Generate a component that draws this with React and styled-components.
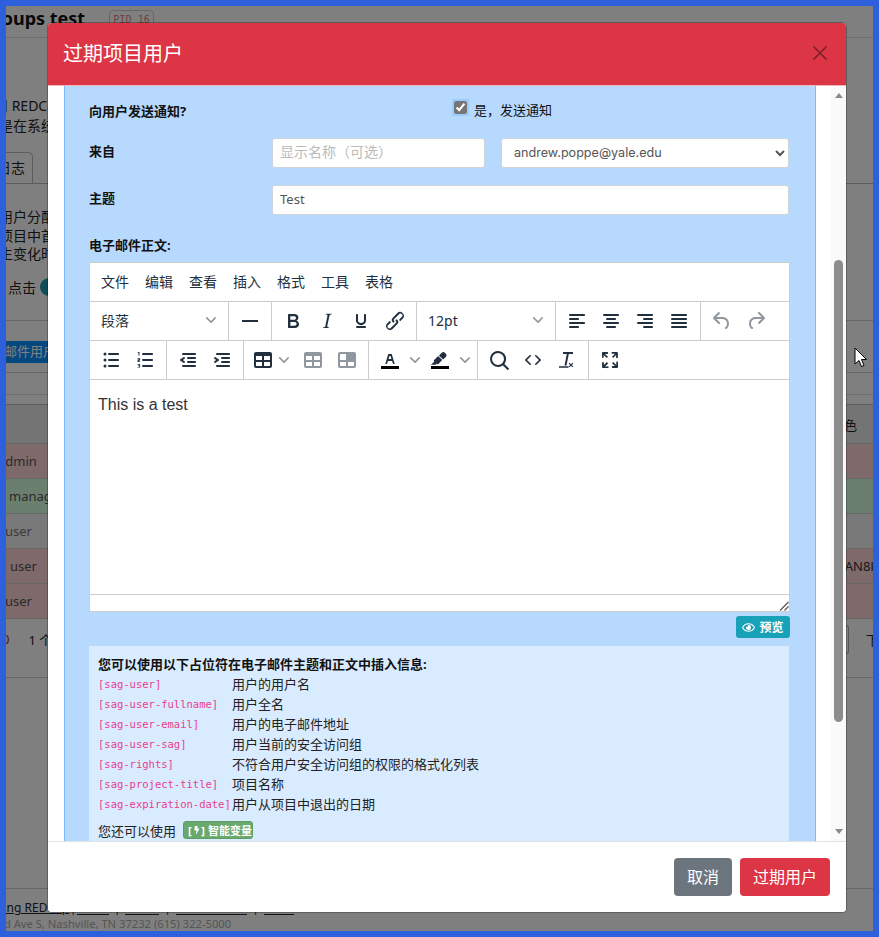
import React from "react";
import styled, { createGlobalStyle } from "styled-components";
import { FaRegEye, FaBolt } from "react-icons/fa";

const sans = `"Noto Sans", "Noto Sans CJK SC", sans-serif`;

const GlobalStyle = createGlobalStyle`
  html, body {
    margin: 0;
    padding: 0;
    background: #2e5fdc;
  }
  * {
    box-sizing: border-box;
  }
`;

const Stage = styled.div`
  position: relative;
  width: 867px;
  height: 925px;
  margin: 6px;
  overflow: hidden;
  background: #fff;
  font-family: ${sans};
  color: #222;
`;

/* page behind the dialog */
const Page = styled.div`
  display: flex;
  flex-direction: column;
  width: 867px;
  font-size: 14px;
  white-space: nowrap;
`;

const TitleBar = styled.div`
  display: flex;
  align-items: flex-start;
  height: 32px;
  border-bottom: 1px solid #ddd;
`;

const PageTitle = styled.h1`
  margin: 0 0 0 -25px;
  font-size: 18px;
  line-height: 24px;
  font-weight: 700;
  color: #111;
`;

const PidBadge = styled.span`
  margin: 4px 0 0 24px;
  padding: 0 3px;
  height: 19px;
  border: 1px solid #ccc;
  border-radius: 4px;
  font: 10.2px/17px "DejaVu Sans Mono", monospace;
  color: #e08484;
`;

const Intro = styled.div`
  margin-top: 58px;
  line-height: 20px;
  font-size: 14px;
`;

const Line = styled.div`
  margin-left: ${(p) => p.$shift || 0}px;
`;

const Clip = styled.span`
  margin-left: ${(p) => p.$shift || 0}px;
`;

const TabStrip = styled.div`
  display: flex;
  height: 39px;
  margin-top: 9px;
  border-bottom: 1px solid #bbb;
  padding-top: 7px;
`;

const Tab = styled.div`
  width: 27px;
  border: 1px solid #bbb;
  border-left: 0;
  border-bottom: 0;
  border-radius: 0 5px 0 0;
  font-size: 14px;
  line-height: 30px;
  text-indent: -9px;
  overflow: hidden;
`;

const Notes = styled.div`
  height: 56px;
  margin-top: 24px;
  line-height: 18.5px;
`;

const HintRow = styled.div`
  display: flex;
  align-items: center;
  gap: 4px;
  height: 20px;
  margin-top: 13px;
  padding-left: 2px;
`;

const InfoDot = styled.span`
  width: 18px;
  height: 18px;
  border-radius: 50%;
  background: #1f9bb0;
  color: #fff;
  font: 700 11px/18px "Liberation Serif", serif;
  text-align: center;
`;

const Rule = styled.div`
  height: 1px;
  margin-top: ${(p) => p.$top}px;
  background: ${(p) => p.$color || "#ccc"};
`;

const BlueButton = styled.div`
  width: 120px;
  height: 22px;
  margin: 20px 0 0 -12px;
  padding-left: 10px;
  border-radius: 3px;
  background: #0a90ff;
  color: #fff;
  font-size: 13px;
  line-height: 21px;
`;

const TableHead = styled.div`
  display: flex;
  justify-content: flex-end;
  height: 40px;
  margin-top: 9px;
  background: #e8e8e8;
  border-top: 1px solid #bbb;
  border-bottom: 1px solid #ccc;
  font-size: 13px;
  line-height: 40px;
  padding-right: 16px;
`;

const rowColors = { red: "#fcd5d5", green: "#d6ffde", plain: "#f2f2f2" };

const TableRow = styled.div`
  display: flex;
  justify-content: space-between;
  height: 35px;
  padding-left: ${(p) => p.$indent || 0}px;
  background: ${(p) => rowColors[p.$tone]};
  border-bottom: 1px solid #ccc;
  font-size: 13px;
  line-height: 34px;
  color: ${(p) => (p.$tone === "plain" ? "#777" : "#555")};
`;

const RowCode = styled.span`
  margin-right: -7px;
  color: #333;
`;

const Pager = styled.div`
  display: flex;
  align-items: center;
  justify-content: space-between;
  height: 59px;
  padding-bottom: 17px;
  border-bottom: 1px solid #ccc;
  font-size: 13px;
`;

const PagerCount = styled.span`
  display: flex;
  gap: 19px;
  margin-left: -4px;
`;

const PagerZero = styled.span`
  color: #a02060;
`;

const PagerBox = styled.span`
  display: flex;
  align-items: center;
  gap: 17px;
  margin-right: -6px;
`;

const PagerInput = styled.span`
  width: 26px;
  height: 29px;
  border: 1px solid #aaa;
  border-left: 0;
  border-radius: 0 3px 3px 0;
`;

const PageFooter = styled.footer`
  margin-top: 210px;
  border-top: 1px solid #ccc;
  padding-top: 10px;
  line-height: 17px;
  color: #aaa;
`;

const FootLinks = styled.div`
  display: flex;
  margin-left: -17px;
  font-size: 12px;
  color: #223;
`;

const FootLink = styled.span`
  display: inline-block;
  min-width: ${(p) => p.$width || 0}px;
  text-decoration: underline;
  border-bottom: ${(p) => (p.$width ? "1px solid #223" : "0")};
  height: 16px;
`;

const FootSep = styled.span`
  width: ${(p) => p.$width}px;
  text-align: center;
`;

const Address = styled.div`
  margin: -1px 0 0 -5px;
  font-size: 11.2px;
`;

const Backdrop = styled.div`
  position: absolute;
  inset: 0;
  background: rgba(0, 0, 0, 0.5);
`;

const Cursor = styled.svg`
  position: absolute;
  left: 848px;
  top: 341px;
`;

/* dialog */
const Modal = styled.div`
  position: absolute;
  left: 42px;
  top: 17px;
  display: flex;
  flex-direction: column;
  width: 798px;
  height: 889px;
  background: #fff;
  border-radius: 4px;
  box-shadow: 0 0 0 1px rgba(0, 0, 0, 0.25);
  overflow: hidden;
`;

const ModalHeader = styled.header`
  display: flex;
  align-items: center;
  justify-content: space-between;
  flex: none;
  height: 63px;
  padding: 0 18px 0 15px;
  background: #dc3545;
  border-bottom: 1px solid #f0b9bf;
`;

const ModalTitle = styled.h2`
  margin: 0 0 4px;
  color: #fff;
  font-size: 20px;
  font-weight: 400;
`;

const CloseIcon = styled.svg`
  margin-bottom: 2px;
`;

const ModalBody = styled.div`
  display: flex;
  flex: 1;
  min-height: 0;
`;

const PanelWrap = styled.div`
  flex: 1;
  min-width: 0;
  padding: 0 15px 0 16px;
  overflow: hidden;
`;

const Panel = styled.div`
  min-height: 100%;
  padding: 14px 25px 0 24px;
  background: #b7d9fe;
  border-left: 1px solid #7ab8ff;
  border-right: 1px solid #7ab8ff;
  color: #111;
`;

const ScrollTrack = styled.div`
  position: relative;
  display: flex;
  flex: none;
  flex-direction: column;
  align-items: center;
  justify-content: space-between;
  width: 15px;
  padding: 7px 0 7px;
  background: #fafafa;
`;

const Arrow = styled.span`
  width: 0;
  height: 0;
  border-left: 4.5px solid transparent;
  border-right: 4.5px solid transparent;
  ${(p) => (p.$down ? "border-top" : "border-bottom")}: 5px solid #8a8a8a;
`;

const Thumb = styled.span`
  position: absolute;
  left: 3px;
  top: 174px;
  width: 9px;
  height: 462px;
  border-radius: 5px;
  background: #8c8c8c;
`;

const NotifyRow = styled.div`
  display: grid;
  grid-template-columns: 364px 1fr;
  align-items: center;
  height: 22px;
`;

const FieldLabel = styled.label`
  font-size: 13px;
  font-weight: 700;
  line-height: 18px;
  margin-top: ${(p) => p.$lift || 0}px;
`;

const CheckLabel = styled.label`
  display: flex;
  align-items: center;
  gap: 7px;
  margin-top: -4px;
  font-size: 13px;
`;

const Check = styled.input`
  width: 13px;
  height: 13px;
  margin: -3px 0 0 1px;
  accent-color: #757575;
  outline: 2px solid #9ccbff;
  outline-offset: 0;
`;

const FormRow = styled.div`
  display: grid;
  grid-template-columns: ${(p) => (p.$split ? "183px 213px 304px" : "183px 517px")};
  align-items: center;
  height: 30px;
  margin-top: ${(p) => p.$top}px;
`;

const TextInput = styled.input`
  width: 100%;
  height: 30px;
  padding: 0 7px 3px;
  border: 1px solid #ced4da;
  border-radius: 3px;
  background: #fff;
  color: #555;
  font: 13px "Noto Sans", "Noto Sans CJK SC", sans-serif;
  &::placeholder {
    color: #bbb;
    font-size: 14px;
  }
`;

const FromSelect = styled.select`
  width: 288px;
  margin-left: 16px;
  height: 30px;
  padding: 0 0 2px 8px;
  border: 1px solid #ced4da;
  border-radius: 3px;
  background: #fff;
  color: #555;
  font: 12.6px Inter, sans-serif;
`;

const BodyLabel = styled.div`
  margin: 21px 0 8px;
  font-size: 13px;
  font-weight: 700;
  line-height: 18px;
`;

const Editor = styled.div`
  display: flex;
  flex-direction: column;
  height: 350px;
  background: #fff;
  border: 1px solid #ccc;
`;

const MenuBar = styled.div`
  display: flex;
  flex: none;
  align-items: center;
  gap: 16px;
  height: 39px;
  padding: 0 0 2px 11px;
  border-bottom: 1px solid #ccc;
  font-size: 14px;
  color: #222f3e;
`;

const ToolRow = styled.div`
  display: flex;
  flex: none;
  height: 39px;
  border-bottom: 1px solid #ccc;
`;

const ToolGroup = styled.div`
  display: flex;
  align-items: center;
  padding: 0 4px;
  border-right: ${(p) => (p.$last ? "0" : "1px solid #ccc")};
`;

const SelectGroup = styled.div`
  display: flex;
  align-items: center;
  justify-content: space-between;
  width: ${(p) => p.$width}px;
  padding: 0 12px 2px 11px;
  border-right: 1px solid #ccc;
  font-size: 14px;
  color: #222f3e;
`;

const ToolButton = styled.span`
  display: flex;
  flex: none;
  align-items: center;
  justify-content: center;
  width: ${(p) => p.$width || 34}px;
  height: 34px;
`;

const ToolIcon = styled.svg`
  width: 24px;
  height: 24px;
  fill: ${(p) => (p.$muted ? "rgba(34, 47, 62, 0.5)" : "#222f3e")};
`;

const Chevron = styled.svg`
  flex: none;
  width: 10px;
  height: 10px;
  margin: ${(p) => p.$margin || "0 3px"};
  fill: rgba(34, 47, 62, 0.5);
`;

const EditArea = styled.div`
  flex: 1;
  padding: 14px 8px 0;
  font: 16px/22px "Liberation Sans", Arial, sans-serif;
  color: #333;
`;

const StatusBar = styled.div`
  display: flex;
  flex: none;
  align-items: flex-end;
  justify-content: flex-end;
  height: 17px;
  border-top: 1px solid #ccc;
`;

const PreviewWrap = styled.div`
  display: flex;
  justify-content: flex-end;
  margin-top: 4px;
`;

const PreviewButton = styled.span`
  display: flex;
  align-items: center;
  justify-content: center;
  gap: 4px;
  width: 54px;
  height: 22px;
  border-radius: 3px;
  background: #17a2b8;
  color: #fff;
  font-size: 12px;
  font-weight: 700;
`;

const InfoBox = styled.div`
  width: 700px;
  height: 260px;
  margin-top: 8px;
  padding: 9px 9px;
  background: #d9ebff;
  font-size: 13px;
  color: #222;
`;

const InfoTitle = styled.div`
  font-weight: 700;
  line-height: 18px;
  color: #111;
`;

const TokenGrid = styled.div`
  display: grid;
  grid-template-columns: 134px 1fr;
  grid-auto-rows: 20px;
  align-items: center;
`;

const Token = styled.code`
  padding-top: 2px;
  font: 10.5px "DejaVu Sans Mono", monospace;
  color: #e83e8c;
`;

const SmartRow = styled.div`
  display: flex;
  align-items: center;
  gap: 7px;
  height: 18px;
  margin-top: 8px;
`;

const SmartBadge = styled.span`
  display: flex;
  align-items: center;
  gap: 1px;
  width: 70px;
  height: 18px;
  padding-left: 4px;
  border: 1px solid #5d9e62;
  border-radius: 3px;
  background: #6aa96d;
  color: #fff;
  font-size: 11px;
  font-weight: 700;
  white-space: nowrap;
`;

const BadgeLabel = styled.span`
  margin-left: 2px;
`;

const ModalFooter = styled.footer`
  display: flex;
  flex: none;
  align-items: center;
  justify-content: flex-end;
  gap: 8px;
  height: 71px;
  padding: 0 16px 0 0;
  border-top: 1px solid #dee2e6;
  background: #fff;
`;

const ActionButton = styled.button`
  height: 38px;
  width: ${(p) => p.$width}px;
  padding: 0 0 3px;
  border: 0;
  border-radius: 4px;
  background: ${(p) => p.$bg};
  color: #fff;
  font: 400 16px "Noto Sans", "Noto Sans CJK SC", sans-serif;
`;

const icons = {
  hr: "M4 11h16v2H4z",
  bold: "M7.8 19c-.3 0-.5 0-.6-.2l-.2-.5V5.7c0-.2 0-.4.2-.5l.6-.2h5c1.5 0 2.7.3 3.5 1 .7.6 1.1 1.4 1.1 2.5a3 3 0 0 1-.6 1.9c-.4.6-1 1-1.6 1.2.4.1.9.3 1.3.6s.8.7 1 1.2c.4.4.5 1 .5 1.6 0 1.3-.4 2.3-1.3 3-.8.7-2.1 1-3.8 1H7.8zm5-8.3c.6 0 1.2-.1 1.6-.5.4-.3.6-.7.6-1.3 0-1.1-.8-1.7-2.3-1.7H9.3v3.5h3.4zm.5 6c.7 0 1.3-.1 1.7-.4.4-.4.6-.9.6-1.5s-.2-1-.7-1.4c-.4-.3-1-.4-2-.4H9.4v3.8h4z",
  italic: "M16.7 4.7l-.1.9h-.3c-.6 0-1 0-1.4.3-.3.3-.4.6-.5 1.1l-2.1 9.8v.6c0 .5.4.8 1.4.8h.2l-.2.8H8l.2-.8h.2c1.1 0 1.8-.5 2-1.5l2-9.8.1-.5c0-.6-.4-.8-1.4-.8h-.3l.2-.9h5.8z",
  underline: "M16 5c.6 0 1 .4 1 1v5.5a4 4 0 0 1-.4 1.8l-1 1.4a5.3 5.3 0 0 1-5.5 1 5 5 0 0 1-1.6-1c-.5-.4-.8-.9-1.1-1.4a4 4 0 0 1-.4-1.8V6c0-.6.4-1 1-1s1 .4 1 1v5.5c0 .3 0 .6.2 1l.6.7a3.3 3.3 0 0 0 2.2.8 3.4 3.4 0 0 0 2.2-.8c.3-.2.4-.5.6-.8l.2-.9V6c0-.6.4-1 1-1zM8 17h8c.6 0 1 .4 1 1s-.4 1-1 1H8a1 1 0 0 1 0-2z",
  link: "M6.2 12.3a1 1 0 0 1 1.4 1.4l-2 2a2 2 0 1 0 2.6 2.8l4.8-4.8a1 1 0 0 0 0-1.4 1 1 0 1 1 1.4-1.3 2.9 2.9 0 0 1 0 4L9.6 20a3.9 3.9 0 0 1-5.5-5.5l2-2zm11.6-.6a1 1 0 0 1-1.4-1.4l2-2a2 2 0 1 0-2.6-2.8L11 10.3a1 1 0 0 0 0 1.4A1 1 0 1 1 9.6 13a2.9 2.9 0 0 1 0-4L14.4 4a3.9 3.9 0 0 1 5.5 5.5l-2 2z",
  alignLeft: "M5 5h14c.6 0 1 .4 1 1s-.4 1-1 1H5a1 1 0 1 1 0-2zm0 4h8c.6 0 1 .4 1 1s-.4 1-1 1H5a1 1 0 1 1 0-2zm0 8h8c.6 0 1 .4 1 1s-.4 1-1 1H5a1 1 0 0 1 0-2zm0-4h14c.6 0 1 .4 1 1s-.4 1-1 1H5a1 1 0 0 1 0-2z",
  alignCenter: "M5 5h14c.6 0 1 .4 1 1s-.4 1-1 1H5a1 1 0 1 1 0-2zm3 4h8c.6 0 1 .4 1 1s-.4 1-1 1H8a1 1 0 1 1 0-2zm0 8h8c.6 0 1 .4 1 1s-.4 1-1 1H8a1 1 0 0 1 0-2zm-3-4h14c.6 0 1 .4 1 1s-.4 1-1 1H5a1 1 0 0 1 0-2z",
  alignRight: "M5 5h14c.6 0 1 .4 1 1s-.4 1-1 1H5a1 1 0 1 1 0-2zm6 4h8c.6 0 1 .4 1 1s-.4 1-1 1h-8a1 1 0 0 1 0-2zm0 8h8c.6 0 1 .4 1 1s-.4 1-1 1h-8a1 1 0 0 1 0-2zm-6-4h14c.6 0 1 .4 1 1s-.4 1-1 1H5a1 1 0 0 1 0-2z",
  alignJustify: "M5 5h14c.6 0 1 .4 1 1s-.4 1-1 1H5a1 1 0 1 1 0-2zm0 4h14c.6 0 1 .4 1 1s-.4 1-1 1H5a1 1 0 1 1 0-2zm0 4h14c.6 0 1 .4 1 1s-.4 1-1 1H5a1 1 0 0 1 0-2zm0 4h14c.6 0 1 .4 1 1s-.4 1-1 1H5a1 1 0 0 1 0-2z",
  undo: "M6.4 8H12c3.7 0 6.2 2 6.8 5.1.6 2.7-.4 5.6-2.3 6.8a1 1 0 0 1-1-1.8c1.1-.6 1.8-2.7 1.4-4.6-.5-2.1-2.1-3.5-4.9-3.5H6.4l3.3 3.3a1 1 0 1 1-1.4 1.4l-5-5a1 1 0 0 1 0-1.4l5-5a1 1 0 0 1 1.4 1.4L6.4 8z",
  redo: "M17.6 10H12c-2.8 0-4.4 1.4-4.9 3.5-.4 2 .3 4 1.4 4.6a1 1 0 1 1-1 1.8c-2-1.2-2.9-4.1-2.3-6.8.6-3 3-5.1 6.8-5.1h5.6l-3.3-3.3a1 1 0 1 1 1.4-1.4l5 5a1 1 0 0 1 0 1.4l-5 5a1 1 0 0 1-1.4-1.4l3.3-3.3z",
  bullets: "M10 5h9c.6 0 1 .4 1 1s-.4 1-1 1h-9a1 1 0 1 1 0-2zm0 6h9c.6 0 1 .4 1 1s-.4 1-1 1h-9a1 1 0 0 1 0-2zm0 6h9c.6 0 1 .4 1 1s-.4 1-1 1h-9a1 1 0 0 1 0-2zM6 4.5a1.5 1.5 0 1 1 0 3 1.5 1.5 0 0 1 0-3zm0 6a1.5 1.5 0 1 1 0 3 1.5 1.5 0 0 1 0-3zm0 6a1.5 1.5 0 1 1 0 3 1.5 1.5 0 0 1 0-3z",
  numbers: "M10 5h9c.6 0 1 .4 1 1s-.4 1-1 1h-9a1 1 0 1 1 0-2zm0 6h9c.6 0 1 .4 1 1s-.4 1-1 1h-9a1 1 0 0 1 0-2zm0 6h9c.6 0 1 .4 1 1s-.4 1-1 1h-9a1 1 0 0 1 0-2zM5.5 4h1v3.5h-1V5h-.8v-.6zM4.5 10.3h2.6v2l-1.6 1h1.6v.7H4.5v-1.6l1.6-1h-1.6zM4.5 16h2.6v3.6H4.5v-.7h1.7v-.7H5v-.6h1.2v-.9H4.500z",
  outdent: "M7 5h12c.6 0 1 .4 1 1s-.4 1-1 1H7a1 1 0 1 1 0-2zm5 4h7c.6 0 1 .4 1 1s-.4 1-1 1h-7a1 1 0 0 1 0-2zm0 4h7c.6 0 1 .4 1 1s-.4 1-1 1h-7a1 1 0 0 1 0-2zm-5 4h12a1 1 0 0 1 0 2H7a1 1 0 0 1 0-2zm1.600-3.800L6.800 12l1.800-1.200a1 1 0 0 0-1.200-1.600l-3 2a1 1 0 0 0 0 1.600l3 2a1 1 0 1 0 1.200-1.600z",
  indent: "M7 5h12c.6 0 1 .4 1 1s-.4 1-1 1H7a1 1 0 1 1 0-2zm5 4h7c.6 0 1 .4 1 1s-.4 1-1 1h-7a1 1 0 0 1 0-2zm0 4h7c.6 0 1 .4 1 1s-.4 1-1 1h-7a1 1 0 0 1 0-2zm-5 4h12a1 1 0 0 1 0 2H7a1 1 0 0 1 0-2zm-2.600-3.800L6.200 12l-1.800-1.200a1 1 0 0 1 1.200-1.600l3 2a1 1 0 0 1 0 1.600l-3 2a1 1 0 1 1-1.200-1.600z",
  table: "M19 4a2 2 0 0 1 2 2v12a2 2 0 0 1-2 2H5a2 2 0 0 1-2-2V6c0-1.100.9-2 2-2h14zM5 14v4h6v-4H5zm14 0h-6v4h6v-4zm0-6h-6v4h6V8zM5 12h6V8H5v4z",
  tableMerged: "M19 4a2 2 0 0 1 2 2v12a2 2 0 0 1-2 2H5a2 2 0 0 1-2-2V6c0-1.100.9-2 2-2h14zM5 14v4h6v-4H5zm14 0h-6v4h6v-4zM5 12h6V6H5v6z",
  search: "M16 17.300a8 8 0 1 1 1.400-1.400l4.300 4.400a1 1 0 0 1-1.400 1.400l-4.400-4.300zm-5-.300a6 6 0 1 0 0-12 6 6 0 0 0 0 12z",
  code: "M9.800 15.700c.3.300.3.800 0 1-.3.400-.9.400-1.200 0l-4.400-4.100a.8.800 0 0 1 0-1.200l4.400-4.200c.3-.3.9-.3 1.200 0 .3.300.3.800 0 1.100L6 12l3.800 3.700zM14.200 15.700c-.3.300-.3.800 0 1 .4.400.9.400 1.200 0l4.400-4.100c.3-.3.3-.9 0-1.200l-4.400-4.200a.8.800 0 0 0-1.200 0c-.3.300-.3.800 0 1.100L18 12l-3.800 3.700z",
  clearFormat: "M8 4h10v2h-4.200l-2.300 11.500h-2L11.800 6H8zM4 18.300h9.500v1.500H4zM14.500 14.700l1.500 1.500 1.500-1.500.8.800-1.500 1.500 1.500 1.500-.8.800-1.500-1.500-1.500 1.500-.8-.8 1.500-1.500-1.500-1.500z",
  fullscreen: "M15.300 10l-1.200-1.300 2.900-3h-2.300a.9.900 0 1 1 0-1.700H19c.5 0 .9.400.9.900v4.400a.9.900 0 1 1-1.800 0V7l-2.900 3zm0 4l3 3v-2.300a.9.900 0 1 1 1.700 0V19c0 .5-.4.900-.9.900h-4.400a.9.900 0 1 1 0-1.800H17l-3-2.900 1.300-1.200zM10 15.400l-2.900 3h2.300a.9.900 0 1 1 0 1.700H5a.9.900 0 0 1-.9-.9v-4.400a.9.900 0 1 1 1.800 0V17l2.900-3 1.200 1.300zM8.700 10L5.700 7v2.300a.9.900 0 0 1-1.700 0V5c0-.5.400-.9.900-.9h4.400a.9.900 0 0 1 0 1.800H7l3 2.900-1.300 1.200z",
  textColor: "M8.700 16h-.8a.5.5 0 0 1-.5-.6l2.700-9c.1-.3.3-.4.500-.4h2.800c.2 0 .4.100.5.400l2.700 9a.5.500 0 0 1-.5.600h-.8a.5.500 0 0 1-.4-.4l-.7-2.200c0-.3-.3-.4-.5-.4h-3.400c-.2 0-.4.100-.5.400l-.7 2.200c0 .3-.2.400-.4.400zm2.600-7.600l-.6 2a.5.500 0 0 0 .5.600h1.600a.5.500 0 0 0 .5-.6l-.6-2c0-.3-.3-.4-.5-.4h-.4c-.2 0-.4.100-.5.400z",
  highlight: "M7.700 16.700H3l3.300-3.300-.7-.8L10.200 8l4 4.100-4 4.200c-.2.200-.6.200-.8 0l-.6-.7-1.100 1.100zm5-7.500L11 7.400l3-2.900a2 2 0 0 1 2.600 0L18 6c.7.700.7 2 0 2.700l-2.900 2.900-1.800-1.800-.5-.6",
};

function Glyph({ name, muted, bar }) {
  return (
    <ToolIcon viewBox="0 0 24 24" $muted={muted}>
      <path fillRule="evenodd" d={icons[name]} />
      {bar && <rect x="3" y="18" width="18" height="3" fill="#000" />}
    </ToolIcon>
  );
}

function Tool({ name, muted, bar, width }) {
  return (
    <ToolButton $width={width}>
      <Glyph name={name} muted={muted} bar={bar} />
    </ToolButton>
  );
}

function ChevronDown({ margin }) {
  return (
    <Chevron viewBox="0 0 10 10" $margin={margin}>
      <path d="M8.700 2.200c.3-.3.8-.3 1 0 .4.400.4.900 0 1.200L5.700 7.800c-.3.300-.9.300-1.200 0L.2 3.400a.8.800 0 0 1 0-1.200c.3-.3.8-.3 1.100 0L5 6l3.700-3.800z" />
    </Chevron>
  );
}

const tokens = [
  ["[sag-user]", "用户的用户名"],
  ["[sag-user-fullname]", "用户全名"],
  ["[sag-user-email]", "用户的电子邮件地址"],
  ["[sag-user-sag]", "用户当前的安全访问组"],
  ["[sag-rights]", "不符合用户安全访问组的权限的格式化列表"],
  ["[sag-project-title]", "项目名称"],
  ["[sag-expiration-date]", "用户从项目中退出的日期"],
];

const menus = ["文件", "编辑", "查看", "插入", "格式", "工具", "表格"];

export default function App() {
  return (
    <>
      <GlobalStyle />
      <Stage>
        <Page>
          <TitleBar>
            <PageTitle>Groups test</PageTitle>
            <PidBadge>PID 16</PidBadge>
          </TitleBar>
          <Intro>
            <Line $shift={-12}>用 REDCap 用户</Line>
            <Line $shift={-7}>是在系统中的</Line>
          </Intro>
          <TabStrip>
            <Tab>日志</Tab>
          </TabStrip>
          <Notes>
            <Line $shift={-7}>用户分配到</Line>
            <Line $shift={-7}>项目中首次</Line>
            <Line $shift={-7}>生变化时</Line>
          </Notes>
          <HintRow>
            点击
            <InfoDot>i</InfoDot>
          </HintRow>
          <Rule $top={23} />
          <BlueButton>邮件用户</BlueButton>
          <Rule $top={9} />
          <Rule $top={21} $color="#ddd" />
          <TableHead>角色</TableHead>
          <TableRow $tone="red">
            <Clip $shift={-8}>admin</Clip>
          </TableRow>
          <TableRow $tone="green" $indent={3}>
            <span>manager</span>
          </TableRow>
          <TableRow $tone="plain">
            <Clip $shift={-1}>user</Clip>
          </TableRow>
          <TableRow $tone="red" $indent={4}>
            <span>user</span>
            <RowCode>AN8H</RowCode>
          </TableRow>
          <TableRow $tone="red">
            <Clip $shift={-1}>user</Clip>
          </TableRow>
          <Pager>
            <PagerCount>
              <PagerZero>0</PagerZero>
              <span>1 个</span>
            </PagerCount>
            <PagerBox>
              <PagerInput />
              <span>下</span>
            </PagerBox>
          </Pager>
          <PageFooter>
            <FootLinks>
              <FootLink>Using REDCap</FootLink>
              <FootSep $width={8}>|</FootSep>
              <FootLink $width={32} />
              <FootSep $width={16}>|</FootSep>
              <FootLink $width={34} />
              <FootSep $width={17}>|</FootSep>
              <FootLink $width={71} />
              <FootSep $width={17}>|</FootSep>
              <FootLink $width={30} />
            </FootLinks>
            <Address>ld Ave S, Nashville, TN 37232 (615) 322-5000</Address>
          </PageFooter>
        </Page>
        <Backdrop />
        <Cursor width="13" height="21" viewBox="0 0 13 21">
          <path d="M1 1v16l4-3.500 2.500 6 2.500-1-2.500-6H12.500z" fill="#fff" stroke="#000" strokeWidth="1" />
        </Cursor>
        <Modal>
          <ModalHeader>
            <ModalTitle>过期项目用户</ModalTitle>
            <CloseIcon width="16" height="16" viewBox="0 0 16 16">
              <path d="M1.500 1.500l13 13M14.500 1.500l-13 13" stroke="#7c1f2b" strokeWidth="1.600" fill="none" />
            </CloseIcon>
          </ModalHeader>
          <ModalBody>
            <PanelWrap>
              <Panel>
                <NotifyRow>
                  <FieldLabel>向用户发送通知?</FieldLabel>
                  <CheckLabel>
                    <Check type="checkbox" defaultChecked />
                    是，发送通知
                  </CheckLabel>
                </NotifyRow>
                <FormRow $split $top={16}>
                  <FieldLabel $lift={-4}>来自</FieldLabel>
                  <TextInput placeholder="显示名称（可选）" />
                  <FromSelect defaultValue="andrew.poppe@yale.edu">
                    <option>andrew.poppe@yale.edu</option>
                  </FromSelect>
                </FormRow>
                <FormRow $top={17}>
                  <FieldLabel $lift={-4}>主题</FieldLabel>
                  <TextInput defaultValue="Test" />
                </FormRow>
                <BodyLabel>电子邮件正文:</BodyLabel>
                <Editor>
                  <MenuBar>
                    {menus.map((m) => (
                      <span key={m}>{m}</span>
                    ))}
                  </MenuBar>
                  <ToolRow>
                    <SelectGroup $width={139}>
                      段落
                      <ChevronDown margin="0" />
                    </SelectGroup>
                    <ToolGroup>
                      <Tool name="hr" />
                    </ToolGroup>
                    <ToolGroup>
                      <Tool name="bold" />
                      <Tool name="italic" />
                      <Tool name="underline" />
                      <Tool name="link" />
                    </ToolGroup>
                    <SelectGroup $width={139}>
                      12pt
                      <ChevronDown margin="0" />
                    </SelectGroup>
                    <ToolGroup>
                      <Tool name="alignLeft" />
                      <Tool name="alignCenter" />
                      <Tool name="alignRight" />
                      <Tool name="alignJustify" />
                    </ToolGroup>
                    <ToolGroup $last>
                      <Tool name="undo" muted />
                      <Tool name="redo" muted />
                    </ToolGroup>
                  </ToolRow>
                  <ToolRow>
                    <ToolGroup>
                      <Tool name="bullets" />
                      <Tool name="numbers" />
                    </ToolGroup>
                    <ToolGroup>
                      <Tool name="outdent" />
                      <Tool name="indent" />
                    </ToolGroup>
                    <ToolGroup>
                      <Tool name="table" width={30} />
                      <ChevronDown margin="0 7px 0 1px" />
                      <Tool name="table" muted />
                      <Tool name="tableMerged" muted />
                    </ToolGroup>
                    <ToolGroup>
                      <Tool name="textColor" bar />
                      <ChevronDown />
                      <Tool name="highlight" bar />
                      <ChevronDown />
                    </ToolGroup>
                    <ToolGroup>
                      <Tool name="search" />
                      <Tool name="code" />
                      <Tool name="clearFormat" />
                    </ToolGroup>
                    <ToolGroup $last>
                      <Tool name="fullscreen" />
                    </ToolGroup>
                  </ToolRow>
                  <EditArea>This is a test</EditArea>
                  <StatusBar>
                    <svg width="10" height="10" viewBox="0 0 10 10">
                      <path d="M1 9.500L9.500 1M5.500 9.500L9.500 5.500" stroke="#555" strokeWidth="1.200" fill="none" />
                    </svg>
                  </StatusBar>
                </Editor>
                <PreviewWrap>
                  <PreviewButton>
                    <FaRegEye size={13} />
                    预览
                  </PreviewButton>
                </PreviewWrap>
                <InfoBox>
                  <InfoTitle>您可以使用以下占位符在电子邮件主题和正文中插入信息:</InfoTitle>
                  <TokenGrid>
                    {tokens.map(([token, text]) => (
                      <React.Fragment key={token}>
                        <Token>{token}</Token>
                        <span>{text}</span>
                      </React.Fragment>
                    ))}
                  </TokenGrid>
                  <SmartRow>
                    您还可以使用
                    <SmartBadge>
                      [<FaBolt size={8} />]<BadgeLabel>智能变量</BadgeLabel>
                    </SmartBadge>
                  </SmartRow>
                </InfoBox>
              </Panel>
            </PanelWrap>
            <ScrollTrack>
              <Arrow />
              <Thumb />
              <Arrow $down />
            </ScrollTrack>
          </ModalBody>
          <ModalFooter>
            <ActionButton $width={58} $bg="#6c757d">取消</ActionButton>
            <ActionButton $width={90} $bg="#dc3545">过期用户</ActionButton>
          </ModalFooter>
        </Modal>
      </Stage>
    </>
  );
}
